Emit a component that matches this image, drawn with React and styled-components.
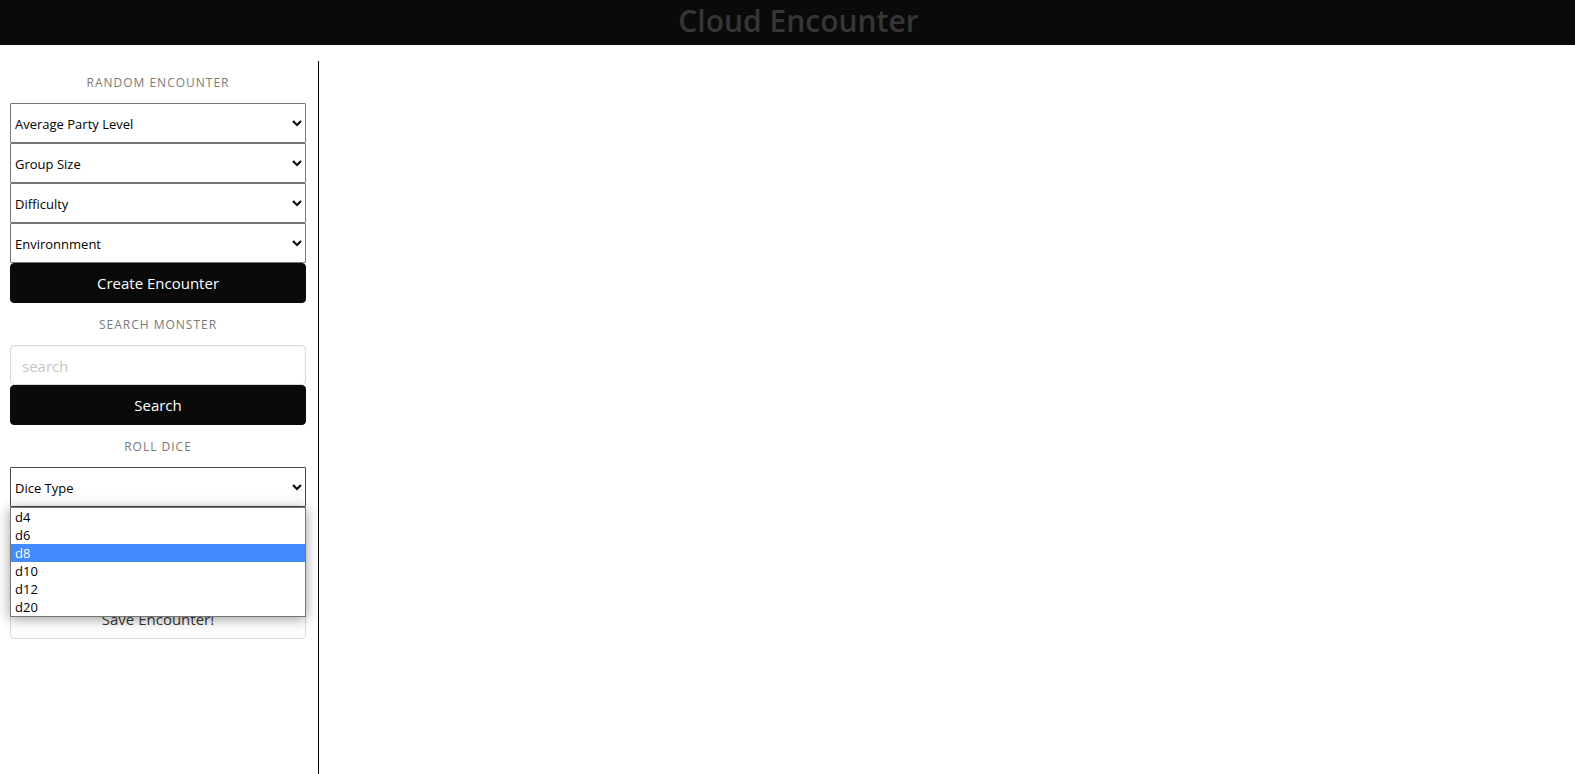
import React from "react";
import styled, { createGlobalStyle } from "styled-components";

const GlobalStyle = createGlobalStyle`
  *, *::before, *::after { box-sizing: border-box; }
  body {
    margin: 0;
    background: #fff;
    color: #363636;
    font-family: "Open Sans", "Noto Sans", sans-serif;
    font-size: 15px;
  }
`;

const Header = styled.header`
  display: flex;
  justify-content: center;
  height: 45px;
  padding-left: 22px;
  background: #0a0a0a;
`;

const Title = styled.h1`
  margin: 0;
  color: #363636;
  font-size: 30px;
  font-weight: 600;
  line-height: 42px;
`;

const Page = styled.div`
  display: flex;
  min-height: calc(100vh - 61px);
  margin-top: 16px;
`;

const Sidebar = styled.aside`
  width: calc(20% + 4px);
  padding: 0 12px 0 10px;
  border-right: 1px solid #000;
`;

const Content = styled.main`
  flex: 1;
`;

const Form = styled.form`
  display: flex;
  flex-direction: column;
  margin: 0;
`;

const SectionLabel = styled.h2`
  margin: 0;
  padding: 13px 0 11px;
  color: #7a7a7a;
  font-size: 12px;
  font-weight: 400;
  line-height: 18px;
  letter-spacing: 1px;
  text-align: center;
  text-transform: uppercase;
`;

const Select = styled.select`
  display: block;
  width: 100%;
  height: 40px;
  padding: 2px 0 0;
  border: 1px solid ${(p) => (p.$open ? "#4a4a4a" : "#767676")};
  border-radius: 1px;
  background-color: #fff;
  color: #000;
  font-family: inherit;
  font-size: 13px;
`;

const TextInput = styled.input`
  height: 40px;
  padding: 4px 11px 2px;
  border: 1px solid #dbdbdb;
  border-radius: 4px;
  box-shadow: inset 0 1px 2px rgba(10, 10, 10, 0.06);
  color: #363636;
  font-family: inherit;
  font-size: 15px;

  &::placeholder { color: #c6c6c6; opacity: 1; }
`;

const Button = styled.button`
  width: 100%;
  height: 40px;
  padding: 0;
  border: 1px solid ${(p) => (p.$dark ? "#0a0a0a" : "#dbdbdb")};
  border-radius: 4px;
  background: ${(p) => (p.$dark ? "#0a0a0a" : "#fff")};
  color: ${(p) => (p.$dark ? "#fff" : "#363636")};
  font-family: inherit;
  font-size: 15px;
`;

const DropdownField = styled.div`
  position: relative;
  margin-bottom: 92px;
`;

const OptionList = styled.ul`
  position: absolute;
  top: 100%;
  left: 0;
  right: 0;
  z-index: 1;
  margin: 0;
  padding: 0;
  border: 1px solid #767676;
  background: #fff;
  box-shadow: 0 2px 12px rgba(0, 0, 0, 0.4);
  list-style: none;
`;

const Option = styled.li`
  padding: 0 4px;
  background: ${(p) => (p.$active ? "#4489ff" : "transparent")};
  color: ${(p) => (p.$active ? "#fff" : "#000")};
  font-size: 13px;
  line-height: 18px;
`;

const encounterFields = [
  "Average Party Level",
  "Group Size",
  "Difficulty",
  "Environnment",
];
const dice = ["d4", "d6", "d8", "d10", "d12", "d20"];

const stop = (event) => event.preventDefault();

export default function App() {
  return (
    <>
      <GlobalStyle />
      <Header>
        <Title>Cloud Encounter</Title>
      </Header>
      <Page>
        <Sidebar>
          <Form onSubmit={stop}>
            <SectionLabel>Random Encounter</SectionLabel>
            {encounterFields.map((name) => (
              <Select key={name} aria-label={name}>
                <option>{name}</option>
              </Select>
            ))}
            <Button $dark>Create Encounter</Button>
          </Form>
          <Form onSubmit={stop}>
            <SectionLabel as="label" htmlFor="monster">
              Search Monster
            </SectionLabel>
            <TextInput id="monster" type="text" placeholder="search" />
            <Button $dark>Search</Button>
          </Form>
          <Form onSubmit={stop}>
            <SectionLabel as="label" htmlFor="dice">
              Roll Dice
            </SectionLabel>
            <DropdownField>
              <Select id="dice" $open>
                <option>Dice Type</option>
              </Select>
              <OptionList role="listbox" aria-label="Dice Type">
                {dice.map((die) => (
                  <Option
                    key={die}
                    role="option"
                    aria-selected={die === "d8"}
                    $active={die === "d8"}
                  >
                    {die}
                  </Option>
                ))}
              </OptionList>
            </DropdownField>
          </Form>
          <Button type="button">Save Encounter!</Button>
        </Sidebar>
        <Content />
      </Page>
    </>
  );
}
